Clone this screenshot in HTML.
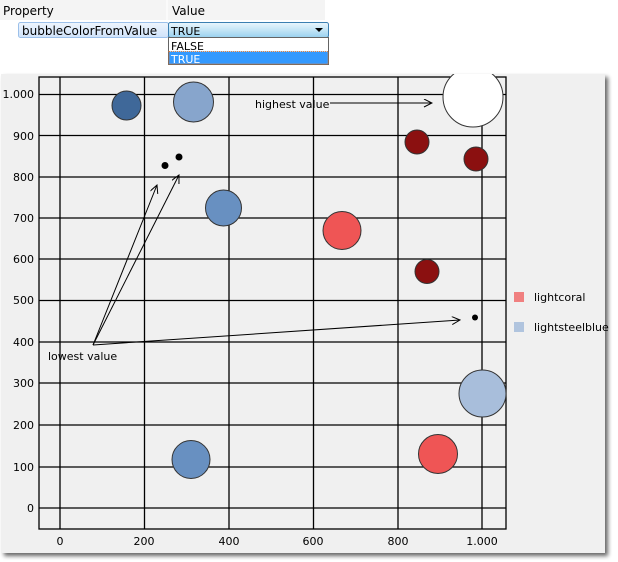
<!DOCTYPE html>
<html><head><meta charset="utf-8"><style>
html,body{margin:0;padding:0;background:#fff;width:618px;height:562px;overflow:hidden;font-family:"Liberation Sans","DejaVu Sans",sans-serif}
</style></head><body>
<svg width="618" height="562" xmlns="http://www.w3.org/2000/svg" style="position:absolute;left:0;top:0;font-family:'DejaVu Sans','Liberation Sans',sans-serif">
<defs>
<linearGradient id="cb" x1="0" y1="0" x2="0" y2="1"><stop offset="0" stop-color="#eaf6fd"/><stop offset="0.5" stop-color="#c4e5f6"/><stop offset="1" stop-color="#98d1ef"/></linearGradient>
<linearGradient id="pc" x1="0" y1="0" x2="0" y2="1"><stop offset="0" stop-color="#eef5fd"/><stop offset="1" stop-color="#d0e3fa"/></linearGradient>
<filter id="sh" x="-5%" y="-5%" width="110%" height="110%"><feGaussianBlur in="SourceAlpha" stdDeviation="2"/><feOffset dx="3" dy="3"/><feComponentTransfer><feFuncA type="linear" slope="0.6"/></feComponentTransfer><feMerge><feMergeNode/><feMergeNode in="SourceGraphic"/></feMerge></filter>
<clipPath id="pan"><rect x="1" y="74" width="604" height="480"/></clipPath>
<marker id="ar" markerWidth="10" markerHeight="10" refX="9" refY="4" orient="auto" markerUnits="userSpaceOnUse"><path d="M1,0 L9,4 L1,8" fill="none" stroke="#000" stroke-width="1"/></marker>
</defs>
<rect x="0" y="0" width="325" height="20" fill="#f4f4f4"/>
<line x1="167" y1="0" x2="167" y2="20" stroke="#fff"/>
<text x="3" y="15" font-size="12" fill="#000">Property</text>
<text x="172" y="15" font-size="12" fill="#000">Value</text>
<rect x="18.5" y="22.5" width="150" height="15" rx="2" fill="url(#pc)" stroke="#9cc0ea"/>
<text x="22" y="35" font-size="12" fill="#000">bubbleColorFromValue</text>
<rect x="168.5" y="22.5" width="160" height="15" rx="2" fill="url(#cb)" stroke="#3c7fb1"/>
<text x="171" y="35" font-size="11" fill="#000">TRUE</text>
<path d="M315,28 L323,28 L319,32 Z" fill="#000"/>
<rect x="168.5" y="37.5" width="160" height="27" fill="#fff" stroke="#646464"/>
<text x="171" y="50" font-size="11" fill="#000">FALSE</text>
<rect x="169" y="51.5" width="159" height="12.5" fill="#3399ff" stroke="#e08040" stroke-dasharray="1,1"/>
<text x="171" y="63" font-size="11" fill="#fff">TRUE</text>
<rect x="1" y="74" width="604" height="479" fill="#f0f0f0" filter="url(#sh)"/>
<g stroke="#000" stroke-width="1.3" fill="none">
<rect x="39" y="77" width="467" height="452"/>
<line x1="60" y1="77" x2="60" y2="529"/><line x1="144.5" y1="77" x2="144.5" y2="529"/><line x1="229" y1="77" x2="229" y2="529"/><line x1="313.5" y1="77" x2="313.5" y2="529"/><line x1="398" y1="77" x2="398" y2="529"/><line x1="482" y1="77" x2="482" y2="529"/>
<line x1="39" y1="94.5" x2="506" y2="94.5"/><line x1="39" y1="135.5" x2="506" y2="135.5"/><line x1="39" y1="177" x2="506" y2="177"/><line x1="39" y1="218" x2="506" y2="218"/><line x1="39" y1="259" x2="506" y2="259"/><line x1="39" y1="300.5" x2="506" y2="300.5"/><line x1="39" y1="342" x2="506" y2="342"/><line x1="39" y1="383" x2="506" y2="383"/><line x1="39" y1="425" x2="506" y2="425"/><line x1="39" y1="467" x2="506" y2="467"/><line x1="39" y1="508" x2="506" y2="508"/>
</g>
<g font-size="11" fill="#000" text-anchor="end">
<text x="34" y="98">1.000</text><text x="34" y="140">900</text><text x="34" y="181">800</text><text x="34" y="222">700</text><text x="34" y="263">600</text><text x="34" y="304">500</text><text x="34" y="346">400</text><text x="34" y="387">300</text><text x="34" y="429">200</text><text x="34" y="471">100</text><text x="34" y="512">0</text>
</g>
<g font-size="11" fill="#000" text-anchor="middle">
<text x="60" y="545">0</text><text x="144" y="545">200</text><text x="229" y="545">400</text><text x="313" y="545">600</text><text x="398" y="545">800</text><text x="482" y="545">1.000</text>
</g>
<g stroke="#333" stroke-width="1" clip-path="url(#pan)">
<circle cx="126.5" cy="105.5" r="14.5" fill="#3f6899"/>
<circle cx="193.5" cy="102" r="20" fill="#87a5cc"/>
<circle cx="223.5" cy="208" r="18" fill="#6890c1"/>
<circle cx="342" cy="230.5" r="19" fill="#ef5555"/>
<circle cx="417" cy="142" r="12" fill="#8b1010"/>
<circle cx="476" cy="159" r="12" fill="#8b1010"/>
<circle cx="427" cy="271.5" r="12" fill="#8b1010"/>
<circle cx="473" cy="97" r="30" fill="#ffffff"/>
<circle cx="482.5" cy="393.5" r="23.5" fill="#a8bedb"/>
<circle cx="438" cy="454" r="19.5" fill="#ef5555"/>
<circle cx="191" cy="459.5" r="19" fill="#6890c1"/>
</g>
<circle cx="165" cy="165.5" r="3.5" fill="#000"/>
<circle cx="179" cy="157" r="3.5" fill="#000"/>
<circle cx="475" cy="317.5" r="3" fill="#000"/>
<g stroke="#000" stroke-width="1" fill="none" marker-end="url(#ar)">
<line x1="330" y1="103" x2="432" y2="103"/>
<line x1="93" y1="345" x2="157" y2="185"/>
<line x1="93" y1="345" x2="179" y2="175"/>
<line x1="93" y1="345" x2="460" y2="320"/>
</g>
<text x="255" y="108" font-size="11" fill="#000">highest value</text>
<text x="48" y="360" font-size="11" fill="#000">lowest value</text>
<rect x="514" y="292" width="10" height="10" fill="#f08080"/>
<rect x="514" y="322" width="10" height="10" fill="#b0c4de"/>
<text x="534" y="301" font-size="11" fill="#000">lightcoral</text>
<text x="534" y="331" font-size="11" fill="#000">lightsteelblue</text>
</svg>
</body></html>
